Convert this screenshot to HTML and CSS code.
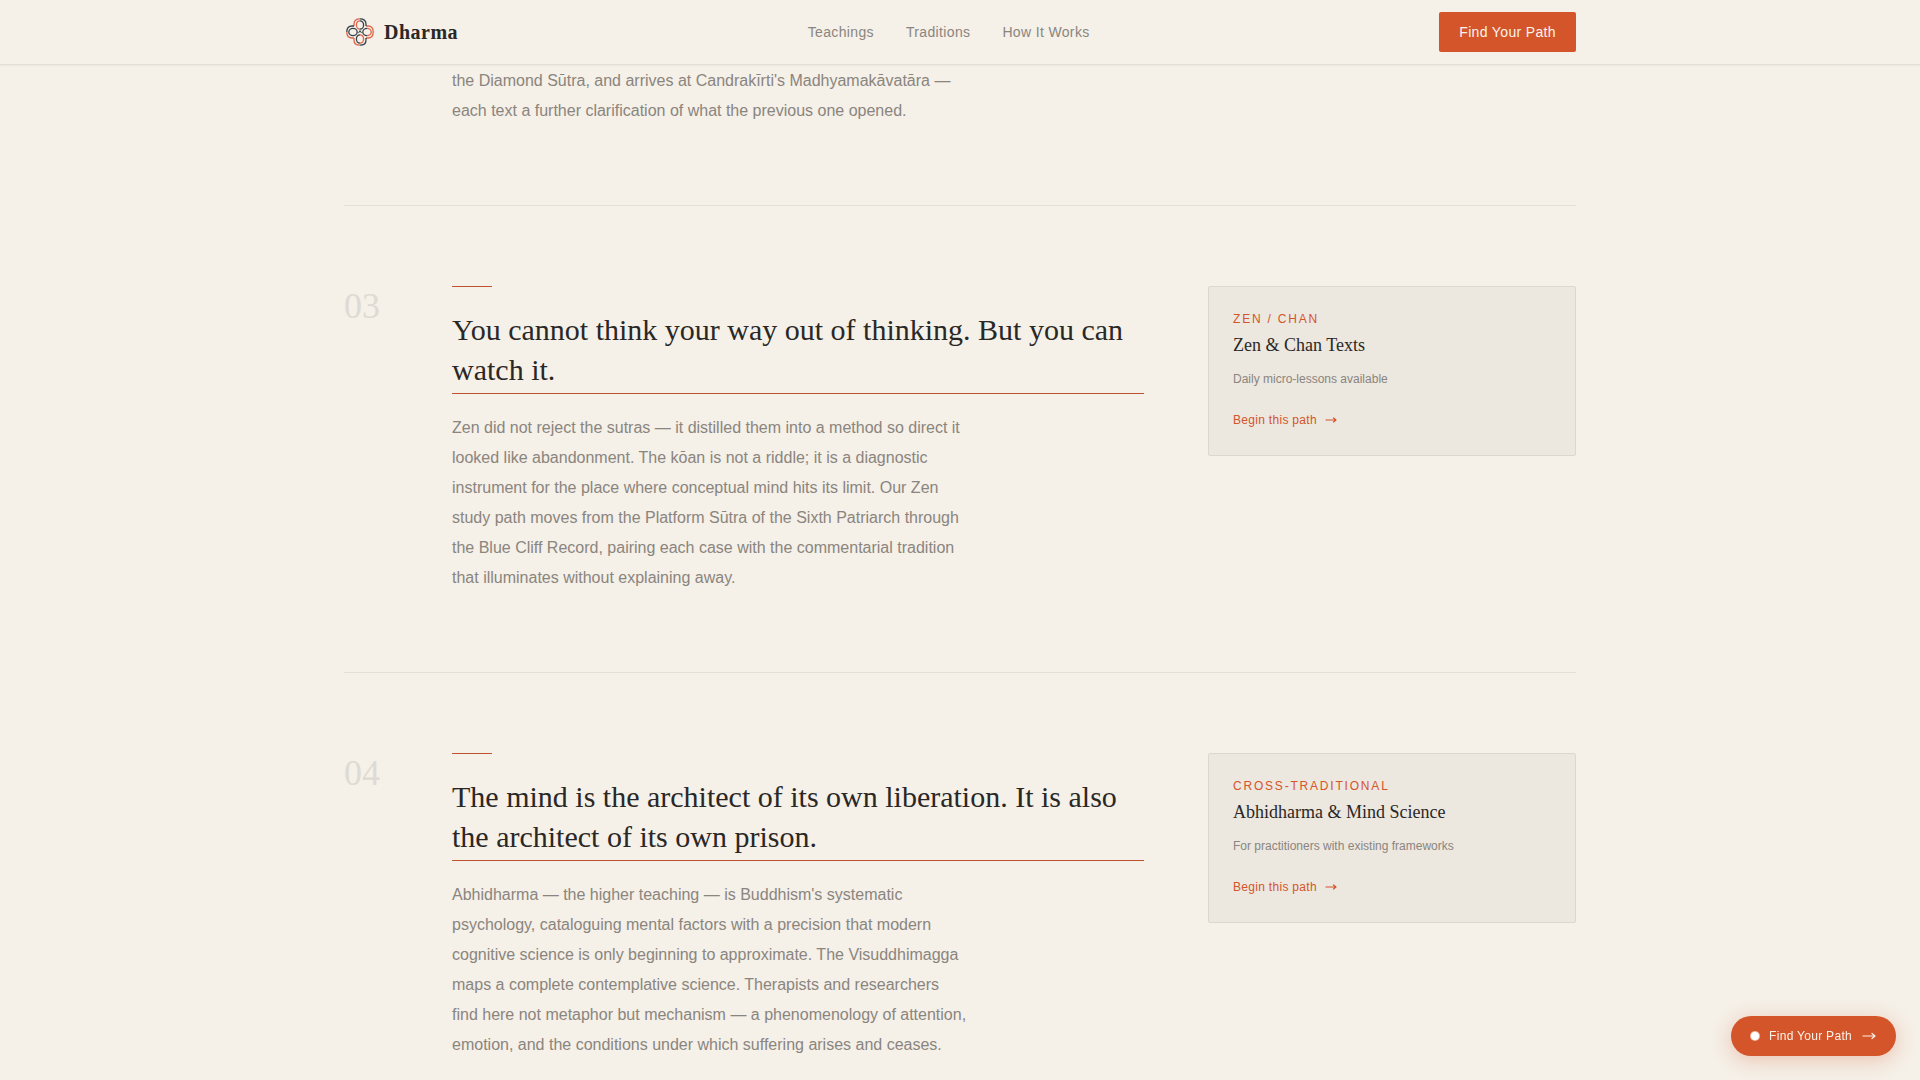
FILE: index.html
```
<!DOCTYPE html>
<html lang="en">

<head>
  <meta charset="UTF-8">
  <meta name="viewport" content="width=device-width, initial-scale=1">
  <title>Dharma</title>
  <link rel="stylesheet" href="styles.css">
</head>

<body>
  <header class="header">
    <div class="container header-inner">
      <a class="brand" href="#">
        <svg class="logo" viewBox="0 0 32 32" fill="none" stroke-width="1.3" aria-hidden="true">
          <!-- outer outline of the four petals -->
          <g stroke="#e0644a">
            <path d="M16 2.800c-4 0-6 2.200-6 5.200v2"/>
            <path d="M22 10h2c3 0 5.200 2 5.200 6s-2.200 6-5.200 6h-2"/>
            <path d="M16 29.200c-4 0-6-2.200-6-5.200v-2"/>
            <path d="M2.800 16c0 4 2.200 6 5.200 6h2"/>
          </g>
          <g stroke="#34424a">
            <path d="M16 2.800c4 0 6 2.200 6 5.200v2"/>
            <path d="M16 29.200c4 0 6-2.200 6-5.200v-2"/>
            <path d="M2.800 16c0-4 2.200-6 5.200-6h2"/>
          </g>
          <!-- inner rings -->
          <g stroke="#34424a">
            <path d="M16 4.800a3.600 4.200 0 0 1 0 8.400"/>
            <ellipse cx="9" cy="16" rx="4.200" ry="3.600"/>
            <path d="M23 12.400a4.200 3.600 0 0 0 0 7.200"/>
            <path d="M16 18.800a3.600 4.200 0 0 0 0 8.400"/>
            <path d="M14.500 17l1.500-2.500 1.500 2.500" stroke-width="1"/>
          </g>
          <g stroke="#e0644a">
            <path d="M16 4.800a3.600 4.200 0 0 0 0 8.400"/>
            <path d="M23 12.400a4.200 3.600 0 0 1 0 7.200"/>
            <path d="M16 18.800a3.600 4.200 0 0 1 0 8.400"/>
          </g>
        </svg>
        <span>Dharma</span>
      </a>
      <nav class="nav">
        <a href="#teachings">Teachings</a>
        <a href="#traditions">Traditions</a>
        <a href="#how">How It Works</a>
      </nav>
      <button class="btn" type="button">Find Your Path</button>
    </div>
  </header>

  <main class="container" id="teachings">
    <section class="teaching teaching-continued">
      <div class="teaching-body">
        <p class="text">the Diamond Sūtra, and arrives at Candrakīrti's Madhyamakāvatāra — each text a further clarification of what the previous one opened.</p>
      </div>
    </section>

    <section class="teaching">
      <span class="number">03</span>
      <div class="teaching-body">
        <div class="accent"></div>
        <h2 class="title">You cannot think your way out of thinking. But you can watch it.</h2>
        <p class="text">Zen did not reject the sutras — it distilled them into a method so direct it looked like abandonment. The kōan is not a riddle; it is a diagnostic instrument for the place where conceptual mind hits its limit. Our Zen study path moves from the Platform Sūtra of the Sixth Patriarch through the Blue Cliff Record, pairing each case with the commentarial tradition that illuminates without explaining away.</p>
      </div>
      <aside class="card">
        <p class="card-label">Zen / Chan</p>
        <h3 class="card-title">Zen &amp; Chan Texts</h3>
        <p class="card-note">Daily micro-lessons available</p>
        <a class="card-link" href="#">Begin this path
          <svg class="arrow" viewBox="0 0 12 12" aria-hidden="true"><path d="M1 6h10M8.500 4l2.500 2-2.500 2"/></svg>
        </a>
      </aside>
    </section>

    <section class="teaching">
      <span class="number">04</span>
      <div class="teaching-body">
        <div class="accent"></div>
        <h2 class="title">The mind is the architect of its own liberation. It is also the architect of its own prison.</h2>
        <p class="text">Abhidharma — the higher teaching — is Buddhism's systematic psychology, cataloguing mental factors with a precision that modern cognitive science is only beginning to approximate. The Visuddhimagga maps a complete contemplative science. Therapists and researchers find here not metaphor but mechanism — a phenomenology of attention, emotion, and the conditions under which suffering arises and ceases.</p>
      </div>
      <aside class="card">
        <p class="card-label">Cross-Traditional</p>
        <h3 class="card-title">Abhidharma &amp; Mind Science</h3>
        <p class="card-note">For practitioners with existing frameworks</p>
        <a class="card-link" href="#">Begin this path
          <svg class="arrow" viewBox="0 0 12 12" aria-hidden="true"><path d="M1 6h10M8.500 4l2.500 2-2.500 2"/></svg>
        </a>
      </aside>
    </section>
  </main>

  <button class="fab" type="button">
    <span class="dot"></span>
    <span>Find Your Path</span>
    <svg class="arrow arrow-lg" viewBox="0 0 14 14" aria-hidden="true"><path d="M1 7h12M10 4.500l3 2.500-3 2.500"/></svg>
  </button>
</body>

</html>
```
FILE: styles.css
```
* {
  box-sizing: border-box;
}

body {
  margin: 0;
  background: #f5f0e8;
  color: #2a2826;
  font-family: "Liberation Sans", Arial, sans-serif;
  font-size: 16px;
}

a {
  text-decoration: none;
}

h2,
h3,
p {
  margin: 0;
  font-weight: 400;
}

button {
  border: 0;
  background: #d4552a;
  color: #f9f2ea;
  font-family: inherit;
  letter-spacing: 0.025em;
  cursor: pointer;
}

.container {
  max-width: 1280px;
  margin: 0 auto;
  padding: 0 24px;
}

/* header */
.header {
  position: sticky;
  top: 0;
  z-index: 10;
  background: #f5f0e8;
  border-bottom: 1px solid #e2ddd6;
  box-shadow: 0 1px 2px rgba(42, 40, 38, 0.05);
}

.header-inner {
  display: flex;
  align-items: center;
  justify-content: space-between;
  height: 64px;
}

.brand {
  display: flex;
  align-items: center;
  gap: 8px;
  color: #2a2826;
  font-family: "Liberation Serif", "Times New Roman", serif;
  font-size: 20px;
  font-weight: 700;
  letter-spacing: 0.025em;
}

.logo {
  width: 32px;
  height: 32px;
}

.nav {
  display: flex;
  gap: 32px;
}

.nav a {
  color: #8a857e;
  font-size: 14px;
  letter-spacing: 0.025em;
}

.btn {
  height: 40px;
  padding: 0 20px;
  border-radius: 2px;
  font-size: 14px;
}

/* teachings */
.teaching {
  display: grid;
  grid-template-columns: repeat(12, 1fr);
  column-gap: 64px;
  align-items: start;
  padding: 80px 0 79px;
  border-top: 1px solid #e4dfd8;
}

.teaching-continued {
  padding-top: 0;
  border-top-color: transparent;
}

.number {
  color: #dfdad3;
  font-family: "Liberation Serif", "Times New Roman", serif;
  font-size: 36px;
  line-height: 40px;
}

.teaching-body {
  grid-column: 2 / span 7;
}

.accent {
  width: 40px;
  height: 1px;
  margin-bottom: 23px;
  background: #bd5230;
}

.title {
  margin-bottom: 19px;
  padding-bottom: 3px;
  border-bottom: 1px solid #bd5230;
  font-family: "Liberation Serif", "Times New Roman", serif;
  font-size: 30px;
  line-height: 40px;
}

.text {
  max-width: 516px;
  color: #8a857e;
  line-height: 30px;
}

/* path card */
.card {
  grid-column: span 4;
  padding: 24px;
  background: #ece7df;
  border: 1px solid #dcd8d1;
  border-radius: 2px;
}

.card-label {
  margin-bottom: 6px;
  color: #d4552a;
  font-size: 12px;
  line-height: 16px;
  letter-spacing: 0.15em;
  text-transform: uppercase;
}

.card-title {
  margin-bottom: 12px;
  font-family: "Liberation Serif", "Times New Roman", serif;
  font-size: 18px;
  line-height: 24px;
}

.card-note {
  margin-bottom: 20px;
  color: #8a857e;
  font-size: 12px;
  line-height: 20px;
}

.card-link {
  display: flex;
  align-items: center;
  gap: 8px;
  color: #d4552a;
  font-size: 12px;
  line-height: 22px;
  letter-spacing: 0.025em;
}

.arrow {
  width: 12px;
  height: 12px;
  fill: none;
  stroke: currentColor;
  stroke-width: 1.2;
  stroke-linecap: round;
  stroke-linejoin: round;
}

.arrow-lg {
  width: 14px;
  height: 14px;
}

/* floating call to action */
.fab {
  position: fixed;
  right: 24px;
  bottom: 24px;
  display: flex;
  align-items: center;
  gap: 10px;
  height: 40px;
  padding: 0 20px;
  border-radius: 20px;
  box-shadow: 0 4px 20px rgba(212, 85, 42, 0.3);
  font-size: 12px;
}

.dot {
  width: 8px;
  height: 8px;
  border-radius: 50%;
  background: #fff;
  box-shadow: 0 0 0 1px rgba(255, 255, 255, 0.6);
}
```
